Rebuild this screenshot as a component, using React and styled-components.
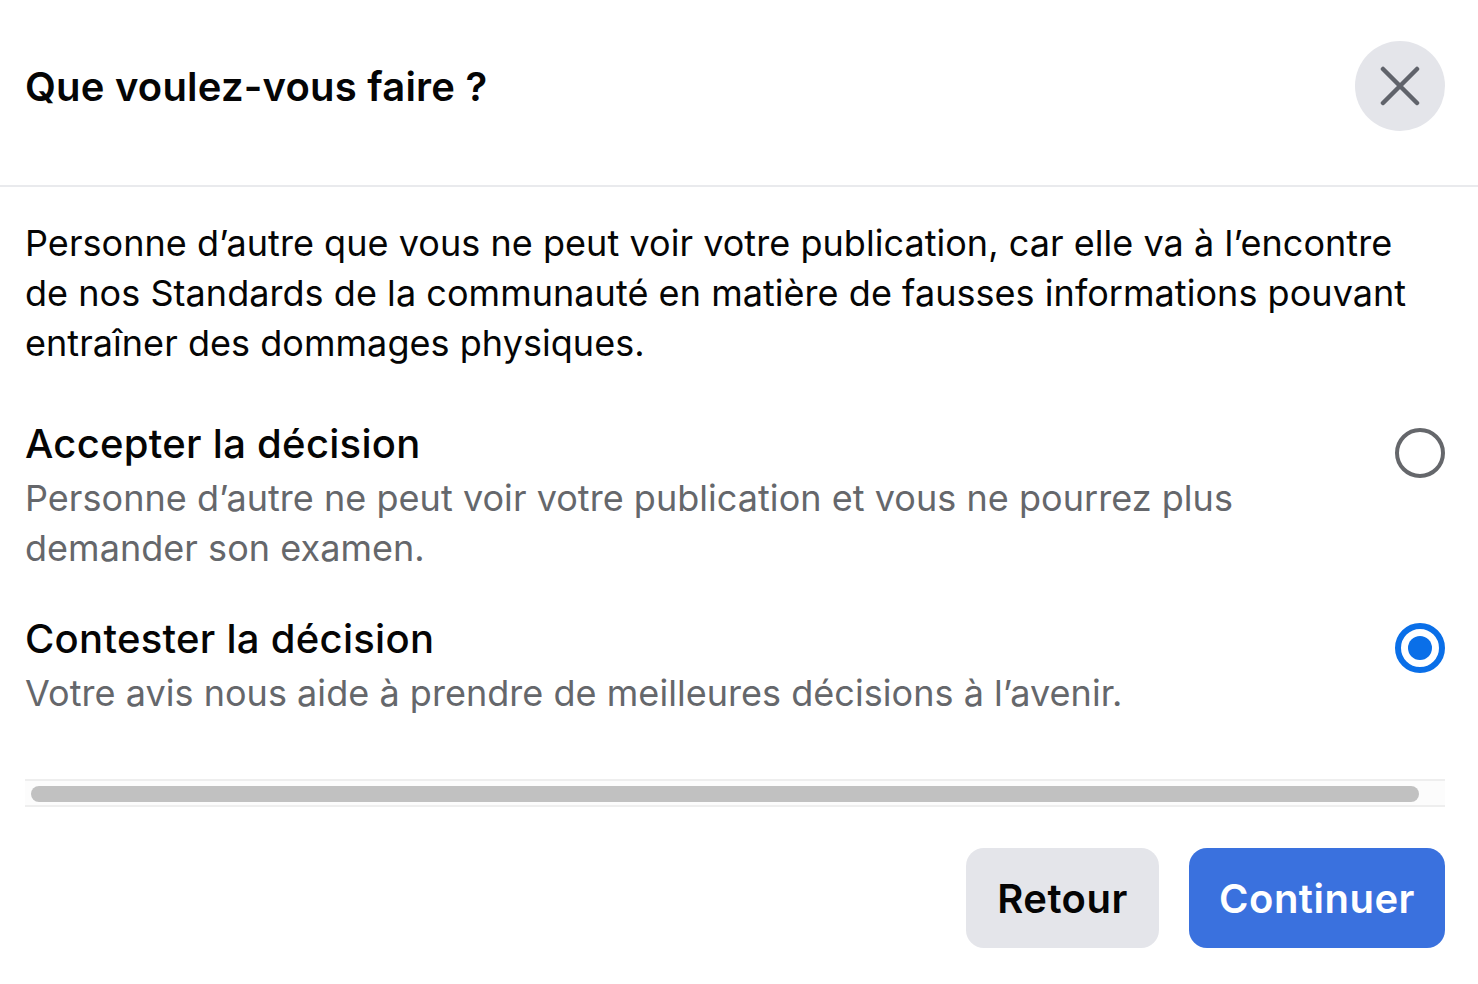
import React from "react";
import styled, { createGlobalStyle } from "styled-components";

const Global = createGlobalStyle`
  html, body { margin: 0; padding: 0; background: #fff; }
  body { font-family: Inter, "Liberation Sans", sans-serif; color: #050505; }
`;
const Dialog = styled.div`
  width: 1478px; height: 984px; display: flex; flex-direction: column; background: #fff; overflow: hidden;
`;
const Header = styled.header`
  box-sizing: border-box; padding: 41px 33px 0 25px; display: flex;
  justify-content: space-between; align-items: flex-start; border-bottom: 2px solid #e9eaed;
  flex: none; height: 187px;
`;
const Title = styled.h1`
  margin: 0; font-size: 40px; line-height: 92px; font-weight: 600; height: 90px; letter-spacing: 0.2px; color: #050505;
`;
const Close = styled.button`
  width: 90px; height: 90px; border: 0; border-radius: 50%; background: #e4e5ea; padding: 0;
  display: flex; align-items: center; justify-content: center;
`;
const Body = styled.main`
  padding: 31px 33px 0 25px; flex: none;
`;
const Intro = styled.p`
  margin: 0 0 47px; font-size: 36px; line-height: 50px; font-weight: 400; letter-spacing: 0.045px; white-space: nowrap; color: #050505;
`;
const Option = styled.div`
  display: flex; justify-content: space-between; align-items: flex-start; margin-bottom: ${p => p.$gap}px;
`;
const OptionText = styled.div`display: flex; flex-direction: column;`;
const OptionTitle = styled.div`
  font-size: 40px; line-height: 58px; font-weight: 500; letter-spacing: 0.28px; white-space: nowrap; color: #050505;
`;
const OptionSub = styled.div`
  font-size: 36px; line-height: 50px; letter-spacing: 0.04px; white-space: nowrap; color: #65676b;
`;
const Radio = styled.span`
  width: 50px; height: 50px; box-sizing: border-box; border-radius: 50%; flex: none; margin-top: 13px;
  border: ${p => (p.$on ? "6px solid #0a6fe8" : "4px solid #65676b")};
  display: flex; align-items: center; justify-content: center;
`;
const Dot = styled.span`width: 24px; height: 24px; border-radius: 50%; background: #0a6fe8;`;
const Track = styled.div`
  margin-top: 61px; height: 28px; box-sizing: border-box; border-top: 2px solid #eeeeee; border-bottom: 2px solid #eeeeee;
  background: #fcfcfc; padding: 5px 26px 0 6px;
`;
const Thumb = styled.div`height: 16px; border-radius: 8px; background: #c1c1c1;`;
const Footer = styled.footer`
  display: flex; justify-content: flex-end; gap: 30px; padding: 41px 33px 0 0;
`;
const Button = styled.button`
  height: 100px; width: ${p => p.$w}px; border: 0; border-radius: 18px; padding: 0;
  font-family: inherit; font-size: 40px; font-weight: 600; letter-spacing: 0.5px;
  background: ${p => (p.$primary ? "#3a71de" : "#e4e5ea")};
  color: ${p => (p.$primary ? "#fff" : "#050505")};
`;

export default function App() {
  return (
    <Dialog>
      <Global />
      <Header>
        <Title>Que voulez-vous faire ?</Title>
        <Close aria-label="Fermer">
          <svg width="40" height="40" viewBox="0 0 40 40" fill="none" stroke="#60636b" strokeWidth="4.5" strokeLinecap="round">
            <path d="M3 3 L37 37 M37 3 L3 37" />
          </svg>
        </Close>
      </Header>
      <Body>
        <Intro>
          Personne d’autre que vous ne peut voir votre publication, car elle va à l’encontre<br />
          de nos Standards de la communauté en matière de fausses informations pouvant<br />
          entraîner des dommages physiques.
        </Intro>
        <Option $gap={37}>
          <OptionText>
            <OptionTitle>Accepter la décision</OptionTitle>
            <OptionSub>
              Personne d’autre ne peut voir votre publication et vous ne pourrez plus<br />
              demander son examen.
            </OptionSub>
          </OptionText>
          <Radio />
        </Option>
        <Option $gap={0}>
          <OptionText>
            <OptionTitle>Contester la décision</OptionTitle>
            <OptionSub>Votre avis nous aide à prendre de meilleures décisions à l’avenir.</OptionSub>
          </OptionText>
          <Radio $on><Dot /></Radio>
        </Option>
        <Track><Thumb /></Track>
      </Body>
      <Footer>
        <Button $w={193}>Retour</Button>
        <Button $w={256} $primary>Continuer</Button>
      </Footer>
    </Dialog>
  );
}
